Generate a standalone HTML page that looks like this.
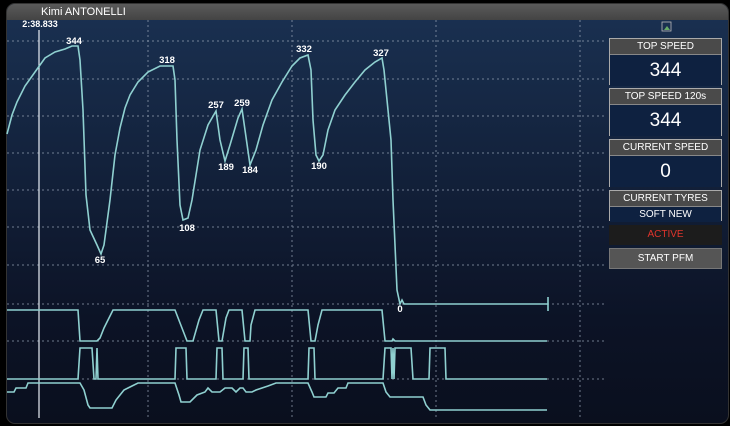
<!DOCTYPE html>
<html><head><style>
body{margin:0;width:730px;height:426px;background:#000;overflow:hidden;font-family:"Liberation Sans",sans-serif}
.panel{position:absolute;left:6px;top:3px;width:721px;height:419px;border-radius:9px;overflow:hidden;background:linear-gradient(#1a3152,#0c1326 75%,#0a0f1e);border:1px solid #333}
.hdr{position:absolute;left:0;top:0;width:100%;height:16px;background:linear-gradient(#5a5a5a,#444);color:#fff;font-size:11px;line-height:16px}
.box{position:absolute;left:609px;width:113px;border:1px solid #aaa;box-sizing:border-box;color:#fff;text-align:center}
.lab{background:#4a4a4a;font-size:10px;height:15px;line-height:15px;border-bottom:1px solid #888}
.val{background:#0e2140;font-size:19px;line-height:31px}
</style></head><body>
<div class="panel"><div class="hdr"><span style="position:absolute;left:34px">Kimi ANTONELLI</span></div></div>
<svg style="position:absolute;left:0;top:0" width="730" height="426">
<g stroke="#9aa6b8" stroke-width="1" stroke-dasharray="2,3" opacity="0.7">
<line x1="7" x2="606" y1="41" y2="41"/><line x1="7" x2="606" y1="79" y2="79"/><line x1="7" x2="606" y1="116" y2="116"/><line x1="7" x2="606" y1="153" y2="153"/><line x1="7" x2="606" y1="190" y2="190"/><line x1="7" x2="606" y1="227" y2="227"/><line x1="7" x2="606" y1="265" y2="265"/><line x1="7" x2="606" y1="304" y2="304"/><line x1="7" x2="606" y1="341" y2="341"/><line x1="7" x2="606" y1="379" y2="379"/>
<line x1="148" x2="148" y1="20" y2="418"/><line x1="292" x2="292" y1="20" y2="418"/><line x1="436" x2="436" y1="20" y2="418"/><line x1="580" x2="580" y1="20" y2="418"/>
</g>
<line x1="39" x2="39" y1="30" y2="418" stroke="#e8eef5" stroke-width="1.2"/>
<g fill="none" stroke="#8fd0d0" stroke-width="1.6">
<polyline points="7,134 12,115 17,102 25,86 35,72 45,58 55,52 65,49 72,46 78,46 80,60 83,110 86,195 90,230 97,245 101,254 104,245 110,200 115,155 120,128 125,108 130,95 138,82 148,72 160,66 173,66 175,80 177,140 180,205 183,220 188,218 192,200 200,150 208,125 216,111 220,140 225,161 230,145 238,118 242,109 245,130 250,165 256,150 263,125 272,100 282,82 292,66 300,58 308,55 311,70 313,120 316,155 319,161 323,155 328,130 335,110 345,95 355,82 365,70 375,62 382,58 384,70 387,100 391,140 393,200 397,290 400,304 402,300 404,304 548,304"/>
<line x1="548" x2="548" y1="297" y2="311"/>
<polyline points="7,310 78,310 80,341 97,341 100,338 104,328 109,318 113,310 175,310 187,341 193,341 199,320 203,310 216,310 219,341 222,341 226,318 229,310 242,310 245,341 250,341 251,325 255,310 308,310 311,341 315,341 318,325 322,310 382,310 385,341 392,341 393,339 395,341 547,341"/>
<polyline points="7,379 78,379 80,348 92,348 94,379 96,379 97,348 98,379 100,379 175,379 176,348 186,348 187,379 216,379 217,348 222,348 223,379 243,379 244,348 248,348 249,379 308,379 309,348 314,348 315,379 383,379 385,348 391,348 392,379 393,348 394,379 395,348 411,348 413,379 429,379 430,348 445,348 446,379 547,379"/>
<polyline points="7,392 14,392 16,388 26,388 28,383 80,383 84,390 88,405 90,408 112,408 116,400 120,395 124,390 128,388 132,386 138,383 175,383 179,395 181,402 190,402 197,395 205,392 208,388 212,392 220,392 225,388 232,388 236,392 240,388 243,388 246,392 252,392 256,390 262,388 268,386 276,383 308,383 312,392 314,397 326,397 328,393 334,393 338,388 346,388 348,383 383,383 386,392 390,397 423,397 426,405 430,410 547,410"/>
</g>
<g fill="#fff" font-size="9.5" font-weight="bold" font-family="Liberation Sans,sans-serif" text-anchor="middle">
<text x="40" y="27" font-size="9">2:38.833</text>
<text x="74" y="44">344</text><text x="100" y="263">65</text><text x="167" y="63">318</text><text x="187" y="231">108</text>
<text x="216" y="108">257</text><text x="226" y="170">189</text><text x="242" y="106">259</text><text x="250" y="173">184</text>
<text x="304" y="52">332</text><text x="319" y="169">190</text><text x="381" y="56">327</text><text x="400" y="312">0</text>
</g>
<rect x="662" y="22" width="9" height="9" fill="none" stroke="#bbb" stroke-width="0.8"/>
<path d="M664 30 L667 26 L670 30Z" fill="#6a6"/>
</svg>
<div class="box" style="top:38px;height:47px"><div class="lab">TOP SPEED</div><div class="val">344</div></div>
<div class="box" style="top:88px;height:48px"><div class="lab">TOP SPEED 120s</div><div class="val">344</div></div>
<div class="box" style="top:139px;height:48px"><div class="lab">CURRENT SPEED</div><div class="val">0</div></div>
<div class="box" style="top:190px;height:31px"><div class="lab">CURRENT TYRES</div><div class="val" style="font-size:10px;line-height:15px">SOFT NEW</div></div>
<div class="box" style="top:225px;height:20px;border:none;background:#1c1c1c;color:#e0342c;font-size:10px;line-height:20px">ACTIVE</div>
<div class="box" style="top:248px;height:21px;border:1px solid #777;background:#555;font-size:10px;line-height:19px">START PFM</div>
</body></html>
